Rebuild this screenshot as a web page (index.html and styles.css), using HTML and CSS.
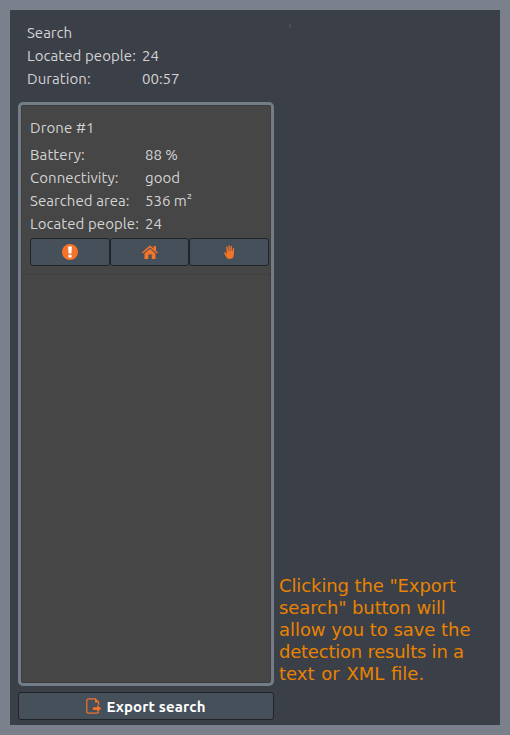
FILE: index.html
```
<!DOCTYPE html>
<html lang="en">
<head>
<meta charset="utf-8">
<title>Search</title>
<link rel="stylesheet" href="styles.css">
</head>
<body>
<main class="window">
  <section class="sidebar">
    <div class="summary">
      <div class="row"><span>Search</span></div>
      <div class="row"><span class="label">Located people:</span><span>24</span></div>
      <div class="row"><span class="label">Duration:</span><span>00:57</span></div>
    </div>
    <div class="drones">
      <article class="drone">
        <div class="row name">Drone #1</div>
        <div class="row"><span class="label">Battery:</span><span>88 %</span></div>
        <div class="row"><span class="label">Connectivity:</span><span>good</span></div>
        <div class="row"><span class="label">Searched area:</span><span>536 m²</span></div>
        <div class="row"><span class="label">Located people:</span><span>24</span></div>
        <div class="actions">
          <button class="button" aria-label="Alert">
            <svg width="16" height="16" viewBox="0 0 16 16"><circle cx="8" cy="8" r="8" fill="#f37329"/><path d="M6.1 2.6h3.8l-.5 7H6.6z M6.4 10.8h3.2v2.7H6.4z" fill="#fff"/></svg>
          </button>
          <button class="button" aria-label="Home">
            <svg width="16" height="14" viewBox="0 0 16 14"><path d="M8 .3 11.5 3.4V1H14v4.7l2 1.8-.9 1.1L8 2.4.9 8.6 0 7.5zM8 3.7l5.5 4.8V14H9.7V9.4H6.4V14H2.5V8.5z" fill="#f37329"/></svg>
          </button>
          <button class="button" aria-label="Stop">
            <svg width="11" height="14" viewBox="0 0 11 14"><path d="M2.2 2.1c0-.9 1.2-.9 1.3 0L4 6h.4V.9c0-1 1.4-1 1.4 0V6h.4l.5-4.5c.1-.9 1.3-.8 1.3.1L7.9 6.2h.4L9 3.5c.2-.8 1.3-.6 1.2.3L9.8 10c-.1 2.5-1.6 4-4.2 4-1.7 0-2.6-.7-3.3-2L.2 8.3c-.5-.9.6-1.4 1.2-.7L2.8 9z" fill="#f37329"/></svg>
          </button>
        </div>
      </article>
    </div>
    <button class="button export">
      <svg width="16" height="16" viewBox="0 0 16 16"><path d="M12.6 7V4.2L9.3.8H2.7Q.8.8.8 2.7v10.6q0 1.9 1.9 1.9h8q1.9 0 1.9-1.4" fill="none" stroke="#f37329" stroke-width="1.2"/><path d="M9 .5V4.5H13.2z M6.8 9.2h4.4V6.9L15.3 10.6 11.2 14.2V12H6.8z" fill="#f37329"/></svg>
      <span>Export search</span>
    </button>
  </section>
  <p class="note"><span class="snug">Clicking the "Export</span><br><span class="snug">search" button will</span><br><span class="slight">allow you to save the</span><br><span class="tight">detection results in a</span><br><span class="wide">text or XML file.</span></p>
  <i class="speck"></i>
</main>
</body>
</html>
```
FILE: styles.css
```
* { box-sizing: border-box; }
body {
  margin: 0;
  color: #d3d3d3;
  font: 15px/23px "Ubuntu", "Noto Sans", sans-serif;
}
.window {
  position: relative;
  display: flex;
  height: 735px;
  padding: 0 8px 5px;
  border: 10px solid #7a808c;
  background: #3b3f48;
}
.sidebar {
  display: flex;
  flex-direction: column;
  flex: 0 0 256px;
}
.summary { height: 92px; padding: 11px 9px 0; }
.row { display: flex; height: 23px; white-space: nowrap; }
.label { flex: 0 0 115px; letter-spacing: 0.07px; }
.drones {
  height: 584px;
  border: 3px solid #737d88;
  border-radius: 5px;
  background: #464646;
  box-shadow: inset 0 0 0 1px #3d3d3d;
}
.drone {
  height: 170px;
  padding: 11px 2px 0 9px;
  border-bottom: 1px solid #3f3f3f;
}
.name { height: 27px; letter-spacing: 0.1px; }
.actions { display: flex; width: 239px; margin-top: 3px; }
.button {
  display: flex;
  flex: 1;
  align-items: center;
  justify-content: center;
  height: 28px;
  padding: 0;
  border: 1px solid #202327;
  border-radius: 3px;
  background: #46505a;
}
.export {
  flex: none;
  gap: 4px;
  margin-top: 6px;
  color: #fff;
  font: bold 15px/23px "Ubuntu", "Noto Sans", sans-serif;
  letter-spacing: 0.12px;
}
.note {
  margin: 565px 0 0 5px;
  color: #e98300;
  font: 18px/22px "DejaVu Sans", sans-serif;
  white-space: nowrap;
}
.snug { letter-spacing: -0.1px; }
.slight { letter-spacing: -0.05px; }
.tight { letter-spacing: -0.23px; }
.wide { word-spacing: 1px; }
.speck {
  position: absolute;
  top: 14px;
  left: 279px;
  width: 2px;
  height: 4px;
  background: #4a5050;
}
```
